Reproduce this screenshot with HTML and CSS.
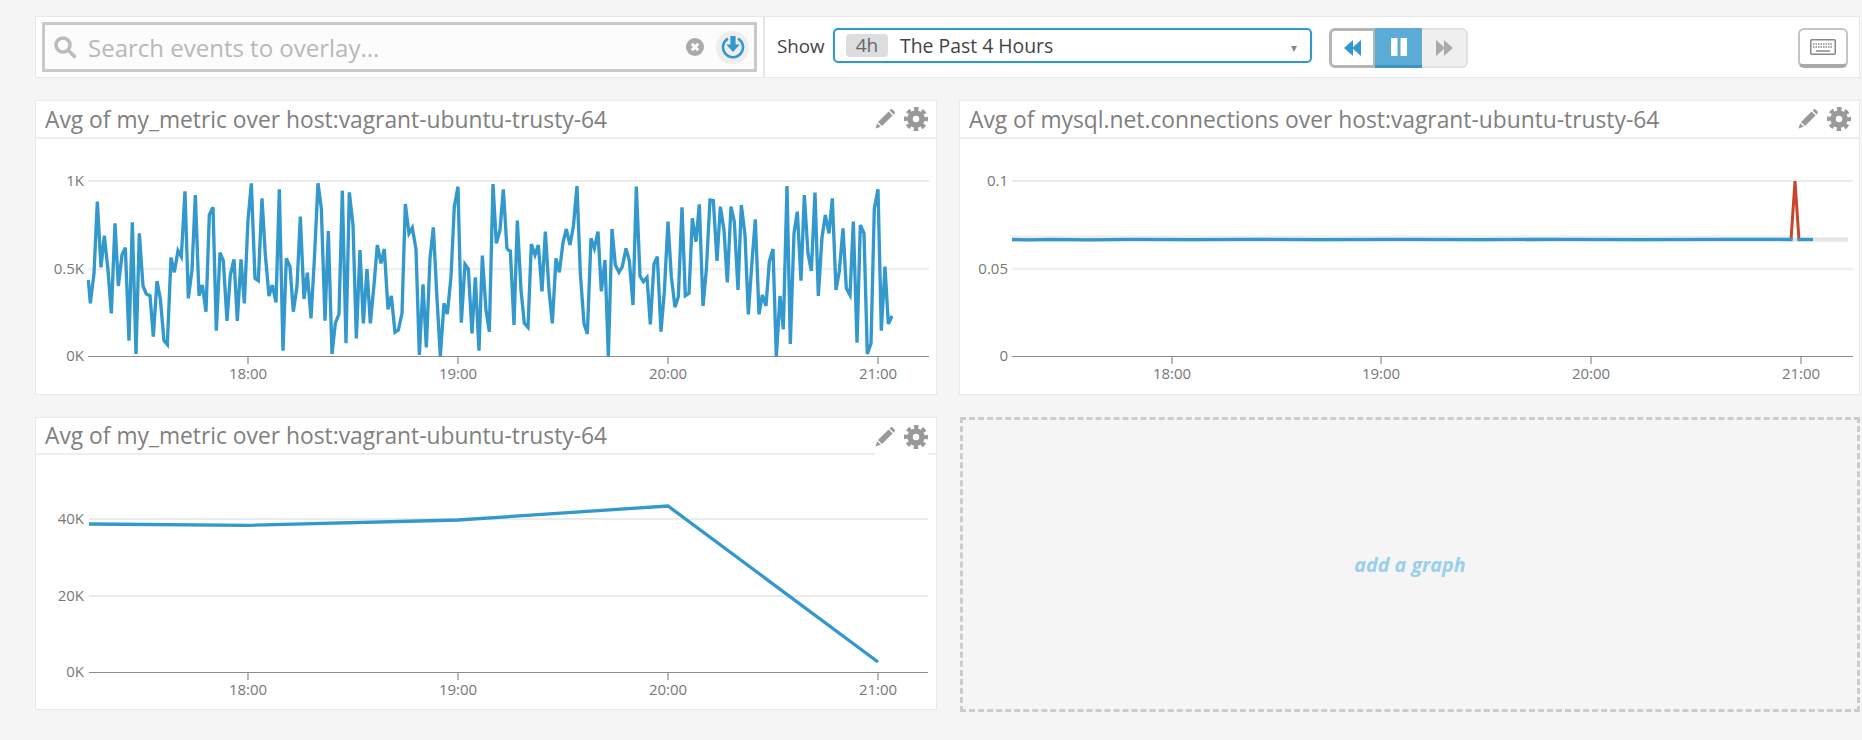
FILE: index.html
```html
<html>

<head>
    <title>Dashboard</title>
    <link rel="stylesheet" href="styles.css">
</head>

<body>
    <svg class="defs" width="0" height="0">
        <symbol id="pencil" viewBox="0 0 20 20">
            <path d="M14.6 1.4l.9-.9a1.5 1.5 0 0 1 2 0l2 2a1.5 1.5 0 0 1 0 2l-.9.9z" />
            <path d="M13.6 2.4l4 4L7 17l-4-4z" />
            <path d="M2.2 14.2l3.6 3.6L.5 19.5z" />
        </symbol>
        <symbol id="gear" viewBox="0 0 24 24">
            <circle cx="12" cy="12" r="6" fill="none" stroke="#999" stroke-width="5.5" />
            <circle cx="12" cy="12" r="10" fill="none" stroke="#999" stroke-width="4" stroke-dasharray="4.4 3.45"
                stroke-dashoffset="2.2" />
        </symbol>
    </svg>

    <div class="topbar">
        <div class="search-panel">
            <div class="search-box">
                <svg class="search-icon" width="23" height="23" viewBox="0 0 23 23">
                    <circle cx="9" cy="9" r="7" />
                    <path d="M14 14l7.5 7.5" />
                </svg>
                <span class="search-text">Search events to overlay...</span>
                <svg class="clear-icon" width="18" height="18" viewBox="0 0 18 18">
                    <circle cx="9" cy="9" r="9" />
                    <path d="M5.8 5.8l6.4 6.4M12.2 5.8l-6.4 6.4" />
                </svg>
                <span class="overlay-btn">
                    <svg class="overlay-icon" width="24" height="24" viewBox="0 0 24 24">
                        <path class="ring" d="M7 3.6a10 10 0 1 0 10 0" />
                        <path class="arrow" d="M9.4 1h5.2v8.6h4.2L12 17 5.200 9.600h4.200z" />
                    </svg>
                </span>
            </div>
        </div>
        <div class="time-panel">
            <span class="show-label">Show</span>
            <div class="time-select">
                <span class="time-badge">4h</span>
                <span class="time-name">The Past 4 Hours</span>
                <span class="caret"></span>
            </div>
            <div class="nav-group">
                <span class="nav-btn nav-back">
                    <svg width="18" height="16" viewBox="0 0 18 16">
                        <path d="M9 0v16L0 8zM17 0v16L8 8z" />
                    </svg>
                </span>
                <span class="nav-btn nav-pause">
                    <svg width="18" height="18" viewBox="0 0 18 18">
                        <path d="M1 0h6.500v18H1zM10.500 0H17v18h-6.500z" />
                    </svg>
                </span>
                <span class="nav-btn nav-next">
                    <svg width="18" height="16" viewBox="0 0 18 16">
                        <path d="M1 0v16l9-8zM9 0v16l9-8z" />
                    </svg>
                </span>
            </div>
            <span class="keys-btn">
                <svg width="26" height="16" viewBox="0 0 26 16">
                    <rect x=".75" y=".75" width="24.500" height="14.500" rx="1" fill="#fff" stroke="#888"
                        stroke-width="1.500" />
                    <path d="M3 5h20M3 8h20" stroke="#888" stroke-width="1.500" stroke-dasharray="1.500 1" />
                    <path d="M6 12h14" stroke="#888" stroke-width="1.500" />
                </svg>
            </span>
        </div>
    </div>

    <div class="board">
        <div class="card">
            <div class="card-header">
                <span class="card-title">Avg of my_metric over host:vagrant-ubuntu-trusty-64</span>
                <span class="card-actions">
                    <svg class="act-pencil"><use href="#pencil" /></svg>
                    <svg class="act-gear"><use href="#gear" /></svg>
                </span>
            </div>
            <svg class="chart" viewBox="36 139 900 255">
                <path class="grid-top" d="M88 181H929" />
                <path class="grid-mid" d="M88 269H929" />
                <path class="axis" d="M88 356.500H929M248 356v8M458 356v8M668 356v8M878 356v8" />
                <text class="y-label" x="84" y="186">1K</text>
                <text class="y-label" x="84" y="274">0.5K</text>
                <text class="y-label" x="84" y="361">0K</text>
                <text class="x-label" x="248" y="379">18:00</text>
                <text class="x-label" x="458" y="379">19:00</text>
                <text class="x-label" x="668" y="379">20:00</text>
                <text class="x-label" x="878" y="379">21:00</text>
                <g transform="translate(30 150) scale(.33333)">
                    <polyline class="series series-thick"
                        points="175,390 181,460 192,370 202,155 213,352 223,257 234,360 244,490 255,220 265,408 276,315 286,293 297,572 307,217 318,612 328,250 339,408 349,432 360,437 370,560 381,393 391,447 402,572 412,584 423,323 433,367 444,302 454,320 465,124 475,445 486,360 496,135 507,437 517,405 528,485 538,195 549,172 559,542 570,308 580,332 591,513 601,375 612,328 622,513 633,328 643,460 654,210 664,100 675,385 685,392 696,145 706,315 717,438 727,405 738,457 748,118 759,602 769,325 780,350 790,485 801,408 811,200 822,447 832,368 843,505 853,330 864,100 874,175 885,512 895,243 906,612 916,520 927,492 937,122 948,580 958,127 969,225 979,565 990,300 1000,520 1011,357 1021,520 1032,405 1042,285 1053,340 1063,297 1074,478 1084,438 1095,547 1105,540 1116,490 1126,162 1137,250 1147,233 1158,298 1168,615 1179,403 1189,592 1200,325 1210,232 1221,445 1231,618 1242,460 1252,492 1263,380 1273,170 1284,110 1294,518 1305,343 1315,357 1326,550 1336,382 1347,602 1357,317 1368,480 1378,545 1389,102 1399,280 1410,240 1420,118 1431,298" />
                </g>
                <g transform="translate(480 150) scale(.33333)">
                    <polyline class="series series-thick"
                        points="81,298 91,303 102,525 112,212 123,420 133,520 144,532 154,282 165,315 175,285 186,424 196,245 207,420 217,520 228,325 238,367 249,278 259,237 270,285 280,230 291,108 301,370 312,520 322,552 333,265 343,295 354,245 364,424 375,330 385,620 396,237 406,345 417,367 427,350 438,295 448,332 459,465 469,110 480,378 490,395 501,382 511,523 522,342 532,320 543,545 553,425 564,215 574,380 585,472 595,440 606,172 616,437 627,430 637,205 648,275 658,163 669,468 679,360 690,150 700,152 711,333 721,170 732,240 742,397 753,170 763,215 774,420 784,165 795,255 805,493 816,335 826,208 837,493 847,435 858,468 868,335 879,297 889,620 900,438 910,538 921,108 931,582 942,250 952,185 963,392 973,135 984,310 994,363 1005,128 1015,438 1026,262 1036,195 1047,250 1057,145 1068,420 1078,363 1089,235 1099,415 1110,435 1120,215 1131,578 1141,225 1152,250 1162,612 1173,580 1183,175 1194,118 1204,542 1215,350 1225,522 1236,498" />
                </g>
            </svg>
        </div>

        <div class="card">
            <div class="card-header">
                <span class="card-title">Avg of mysql.net.connections over host:vagrant-ubuntu-trusty-64</span>
                <span class="card-actions">
                    <svg class="act-pencil"><use href="#pencil" /></svg>
                    <svg class="act-gear"><use href="#gear" /></svg>
                </span>
            </div>
            <svg class="chart" viewBox="960 139 899 255">
                <path class="grid-top" d="M1012 181H1853" />
                <path class="grid-mid" d="M1012 269H1853" />
                <path class="axis" d="M1012 356.500H1853M1172 356v8M1381 356v8M1591 356v8M1801 356v8" />
                <text class="y-label" x="1008" y="186">0.1</text>
                <text class="y-label" x="1008" y="274">0.05</text>
                <text class="y-label" x="1008" y="361">0</text>
                <text class="x-label" x="1172" y="379">18:00</text>
                <text class="x-label" x="1381" y="379">19:00</text>
                <text class="x-label" x="1591" y="379">20:00</text>
                <text class="x-label" x="1801" y="379">21:00</text>
                <path class="band" d="M1012 239.500H1848" />
                <path class="band-edge" d="M1012 236.500H1790" />
                <polyline class="spike" points="1791,240 1795,181 1799,240" />
                <polyline class="series"
                    points="1012,239.500 1030,239.800 1050,239.300 1090,239.800 1130,239.400 1190,239.700 1250,239.300 1320,239.700 1400,239.300 1480,239.700 1560,239.300 1640,239.700 1720,239.300 1792.500,239.500" />
                <path class="series" d="M1797.500 239.500H1813" />
            </svg>
        </div>

        <div class="card card-short">
            <div class="card-header">
                <span class="card-title">Avg of my_metric over host:vagrant-ubuntu-trusty-64</span>
                <span class="card-actions">
                    <svg class="act-pencil"><use href="#pencil" /></svg>
                    <svg class="act-gear"><use href="#gear" /></svg>
                </span>
            </div>
            <svg class="chart" viewBox="36 455 900 254">
                <path class="grid-top" d="M89 519H928" />
                <path class="grid-top" d="M89 596H928" />
                <path class="axis" d="M89 672.500H928M248 672v8M458 672v8M668 672v8M878 672v8" />
                <text class="y-label" x="84" y="524">40K</text>
                <text class="y-label" x="84" y="601">20K</text>
                <text class="y-label" x="84" y="677">0K</text>
                <text class="x-label" x="248" y="695">18:00</text>
                <text class="x-label" x="458" y="695">19:00</text>
                <text class="x-label" x="668" y="695">20:00</text>
                <text class="x-label" x="878" y="695">21:00</text>
                <polyline class="series" points="89,524 248,525.300 458,520 668,506 878,662" />
            </svg>
        </div>

        <div class="add-graph">add a graph</div>
    </div>
</body>
</html>
```

FILE: styles.css
```css
body {
    margin: 0;
    padding: 16px 2px 0 35px;
    height: 740px;
    box-sizing: border-box;
    overflow: hidden;
    background-color: #f5f5f5;
    font-family: "Open Sans", "Liberation Sans", sans-serif;
}

.defs {
    display: block;
    height: 0;
}

/* top bar */
.topbar {
    display: flex;
    height: 62px;
    box-sizing: border-box;
    border: 1px solid #e9e9e9;
    background: #ffffff;
}

.search-panel {
    width: 729px;
    flex: none;
    box-sizing: border-box;
    padding: 5px 6px;
    border-right: 2px solid #e6e6e6;
}

.search-box {
    display: flex;
    align-items: center;
    height: 50px;
    box-sizing: border-box;
    padding: 0 5px 0 9px;
    border: 3px solid #c9c9c9;
    background: #fcfcfc;
}

.search-icon {
    flex: none;
    fill: none;
    stroke: #bbbbbb;
    stroke-width: 3.5;
}

.search-text {
    flex: 1;
    margin-left: 11px;
    font-size: 24px;
    color: #b8b8b8;
}

.clear-icon {
    flex: none;
    margin-right: 12px;
}

.clear-icon circle {
    fill: #aaaaaa;
}

.clear-icon path {
    stroke: #ffffff;
    stroke-width: 3;
    fill: none;
}

.overlay-btn {
    display: flex;
    align-items: center;
    justify-content: center;
    width: 33px;
    height: 33px;
    border-radius: 50%;
    background: #eeeeee;
}

.overlay-icon .ring {
    fill: none;
    stroke: #3498cd;
    stroke-width: 2.6;
}

.overlay-icon .arrow {
    fill: #3498cd;
}

.time-panel {
    flex: 1;
    display: flex;
    align-items: flex-start;
    padding: 11px 11px 0 12px;
}

.show-label {
    width: 56px;
    line-height: 37px;
    font-size: 18.8px;
    color: #444444;
}

.time-select {
    display: flex;
    align-items: center;
    width: 479px;
    height: 35px;
    box-sizing: border-box;
    padding: 0 13px 0 11px;
    border: 2px solid #3498cd;
    border-radius: 5px;
    box-shadow: 0 0 3px #cfe6f4;
}

.time-badge {
    width: 42px;
    line-height: 23px;
    border-radius: 4px;
    background: #dddddd;
    text-align: center;
    font-size: 19px;
    color: #666666;
}

.time-name {
    flex: 1;
    margin-left: 12px;
    font-size: 19.4px;
    color: #444444;
}

.caret {
    width: 0;
    height: 0;
    margin-top: 6px;
    border-top: 6px solid #888888;
    border-left: 3.5px solid transparent;
    border-right: 3.5px solid transparent;
}

.nav-group {
    display: flex;
    height: 40px;
    margin-left: 17px;
}

.nav-btn {
    display: flex;
    align-items: center;
    justify-content: center;
    box-sizing: border-box;
}

.nav-back {
    width: 46px;
    border: 3px solid #b5b5b5;
    border-right-width: 2px;
    border-radius: 6px 0 0 6px;
    background: #ffffff;
    fill: #3498cd;
}

.nav-pause {
    width: 47px;
    border-bottom: 3px solid #3d94c5;
    background: #5cacd6;
    fill: #ffffff;
}

.nav-next {
    width: 46px;
    border: 2px solid #e0e0e0;
    border-left: 0;
    border-radius: 0 6px 6px 0;
    background: #efefef;
    fill: #aaaaaa;
}

.keys-btn {
    display: flex;
    align-items: center;
    justify-content: center;
    width: 50px;
    height: 40px;
    margin-left: auto;
    box-sizing: border-box;
    border: 2px solid #c4c4c4;
    border-bottom: 4px solid #aaaaaa;
    border-radius: 6px;
}

/* graphs */
.board {
    display: grid;
    grid-template-columns: 902px 901px;
    grid-auto-rows: 295px;
    column-gap: 22px;
    row-gap: 22px;
    margin-top: 22px;
}

.card {
    display: flex;
    flex-direction: column;
    box-sizing: border-box;
    border: 1px solid #e9e9e9;
    background: #ffffff;
}

.card-short {
    height: 293px;
}

.card-header {
    flex: 1;
    display: flex;
    align-items: center;
    justify-content: space-between;
    padding: 0 8px 0 9px;
    border-bottom: 2px solid #eeeeee;
}

.card-title {
    font-size: 22.8px;
    color: #808080;
}

.card-actions {
    display: flex;
    align-items: center;
    gap: 9px;
    fill: #999999;
}

.card-short .card-actions {
    align-self: stretch;
    margin-bottom: -2px;
    position: relative;
    background: #ffffff;
}

.act-pencil {
    width: 20px;
    height: 20px;
}

.act-gear {
    width: 24px;
    height: 24px;
}

.chart {
    display: block;
    flex: none;
    width: 100%;
    height: 255px;
    font-size: 15px;
}

.card-short .chart {
    height: 254px;
}

.chart text {
    fill: #777777;
}

.y-label {
    text-anchor: end;
}

.x-label {
    text-anchor: middle;
}

.grid-top {
    fill: none;
    stroke: #e4e4e4;
    stroke-width: 1.5;
}

.grid-mid {
    fill: none;
    stroke: #f0f0f0;
    stroke-width: 2.5;
}

.axis {
    fill: none;
    stroke: #8c8c8c;
    stroke-width: 1.2;
}

.series {
    fill: none;
    stroke: #3398cc;
    stroke-width: 3.3;
}

.series-thick {
    stroke-width: 10;
}

.spike {
    fill: none;
    stroke: #c8452c;
    stroke-width: 3;
}

.band {
    fill: none;
    stroke: #e6e6e6;
    stroke-width: 4.5;
}

.band-edge {
    fill: none;
    stroke: #eeeeee;
    stroke-width: 2;
}

.add-graph {
    display: flex;
    align-items: center;
    justify-content: center;
    margin-left: 1px;
    box-sizing: border-box;
    border: 3px dashed #cccccc;
    font-size: 19.7px;
    font-weight: bold;
    font-style: italic;
    color: #9acfec;
}
```
